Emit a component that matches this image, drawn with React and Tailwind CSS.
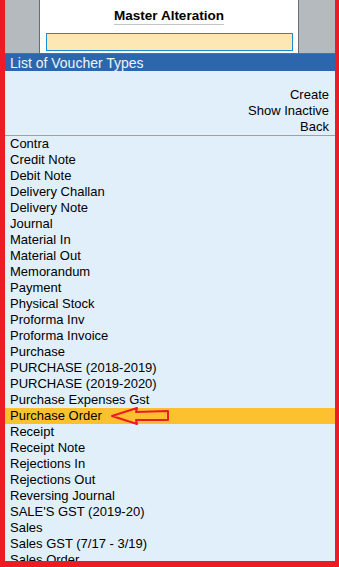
import React from 'react';

const voucherTypes = [
  'Contra',
  'Credit Note',
  'Debit Note',
  'Delivery Challan',
  'Delivery Note',
  'Journal',
  'Material In',
  'Material Out',
  'Memorandum',
  'Payment',
  'Physical Stock',
  'Proforma Inv',
  'Proforma Invoice',
  'Purchase',
  'PURCHASE (2018-2019)',
  'PURCHASE (2019-2020)',
  'Purchase Expenses Gst',
  'Purchase Order',
  'Receipt',
  'Receipt Note',
  'Rejections In',
  'Rejections Out',
  'Reversing Journal',
  "SALE'S GST (2019-20)",
  'Sales',
  'Sales GST (7/17 - 3/19)',
  'Sales Order',
];

// hand-drawn style red arrow pointing at the selected row
const PointerArrow = () => (
  <svg width="62" height="18" viewBox="0 0 62 18" className="absolute left-[105px] top-[-1px]">
    <polygon
      points="2,9 27,1 26,5 58,4 58,13 26,13 27,17"
      fill="none"
      stroke="#ed1c24"
      strokeWidth="2"
      strokeLinejoin="round"
    />
  </svg>
);

export default function App() {
  return (
    <div
      className="w-[339px] h-[567px] overflow-hidden flex flex-col border-l-[5px] border-r-[4px] border-b-[6px] border-[#ed1c24] bg-[#e0effa] text-black"
      style={{ fontFamily: '"Liberation Sans", Arial, sans-serif' }}
    >
      {/* header */}
      <div className="flex h-[54px] shrink-0 border-b border-[#6b6b6b]">
        <div className="w-[35px] bg-[#b5babe] border-r border-[#6b6b6b]" />
        <div className="flex-1 bg-white flex flex-col items-center">
          <div className="mt-[8px] text-[13.5px] font-bold leading-[15px] border-b border-[#c4c4c4] pb-[1px]">
            Master Alteration
          </div>
          <div className="mt-[8px] ml-[6px] mr-[5px] self-stretch h-[18px] bg-[#fde7b3] border border-[#1e8ad0]" />
        </div>
        <div className="w-[37px] bg-[#b5babe] border-l border-[#6b6b6b]" />
      </div>

      {/* title bar */}
      <div className="h-[17px] shrink-0 bg-[#2c67ae] text-[#eef3fa] text-[14px] leading-[18px] pl-[5px]">
        List of Voucher Types
      </div>

      {/* actions */}
      <div className="pt-[16px] pr-[6px] flex flex-col items-end text-[13px] leading-[16px] border-b border-[#a0a0a0] shrink-0">
        <div>Create</div>
        <div>Show Inactive</div>
        <div>Back</div>
      </div>

      {/* list */}
      <div className="flex flex-col text-[13px] leading-[16px]">
        {voucherTypes.map((name) => (
          <div
            key={name}
            className={`relative h-[16px] pl-[5px] whitespace-nowrap ${
              name === 'Purchase Order' ? 'bg-[#fdc02f]' : ''
            }`}
          >
            {name}
            {name === 'Purchase Order' && <PointerArrow />}
          </div>
        ))}
      </div>
    </div>
  );
}
